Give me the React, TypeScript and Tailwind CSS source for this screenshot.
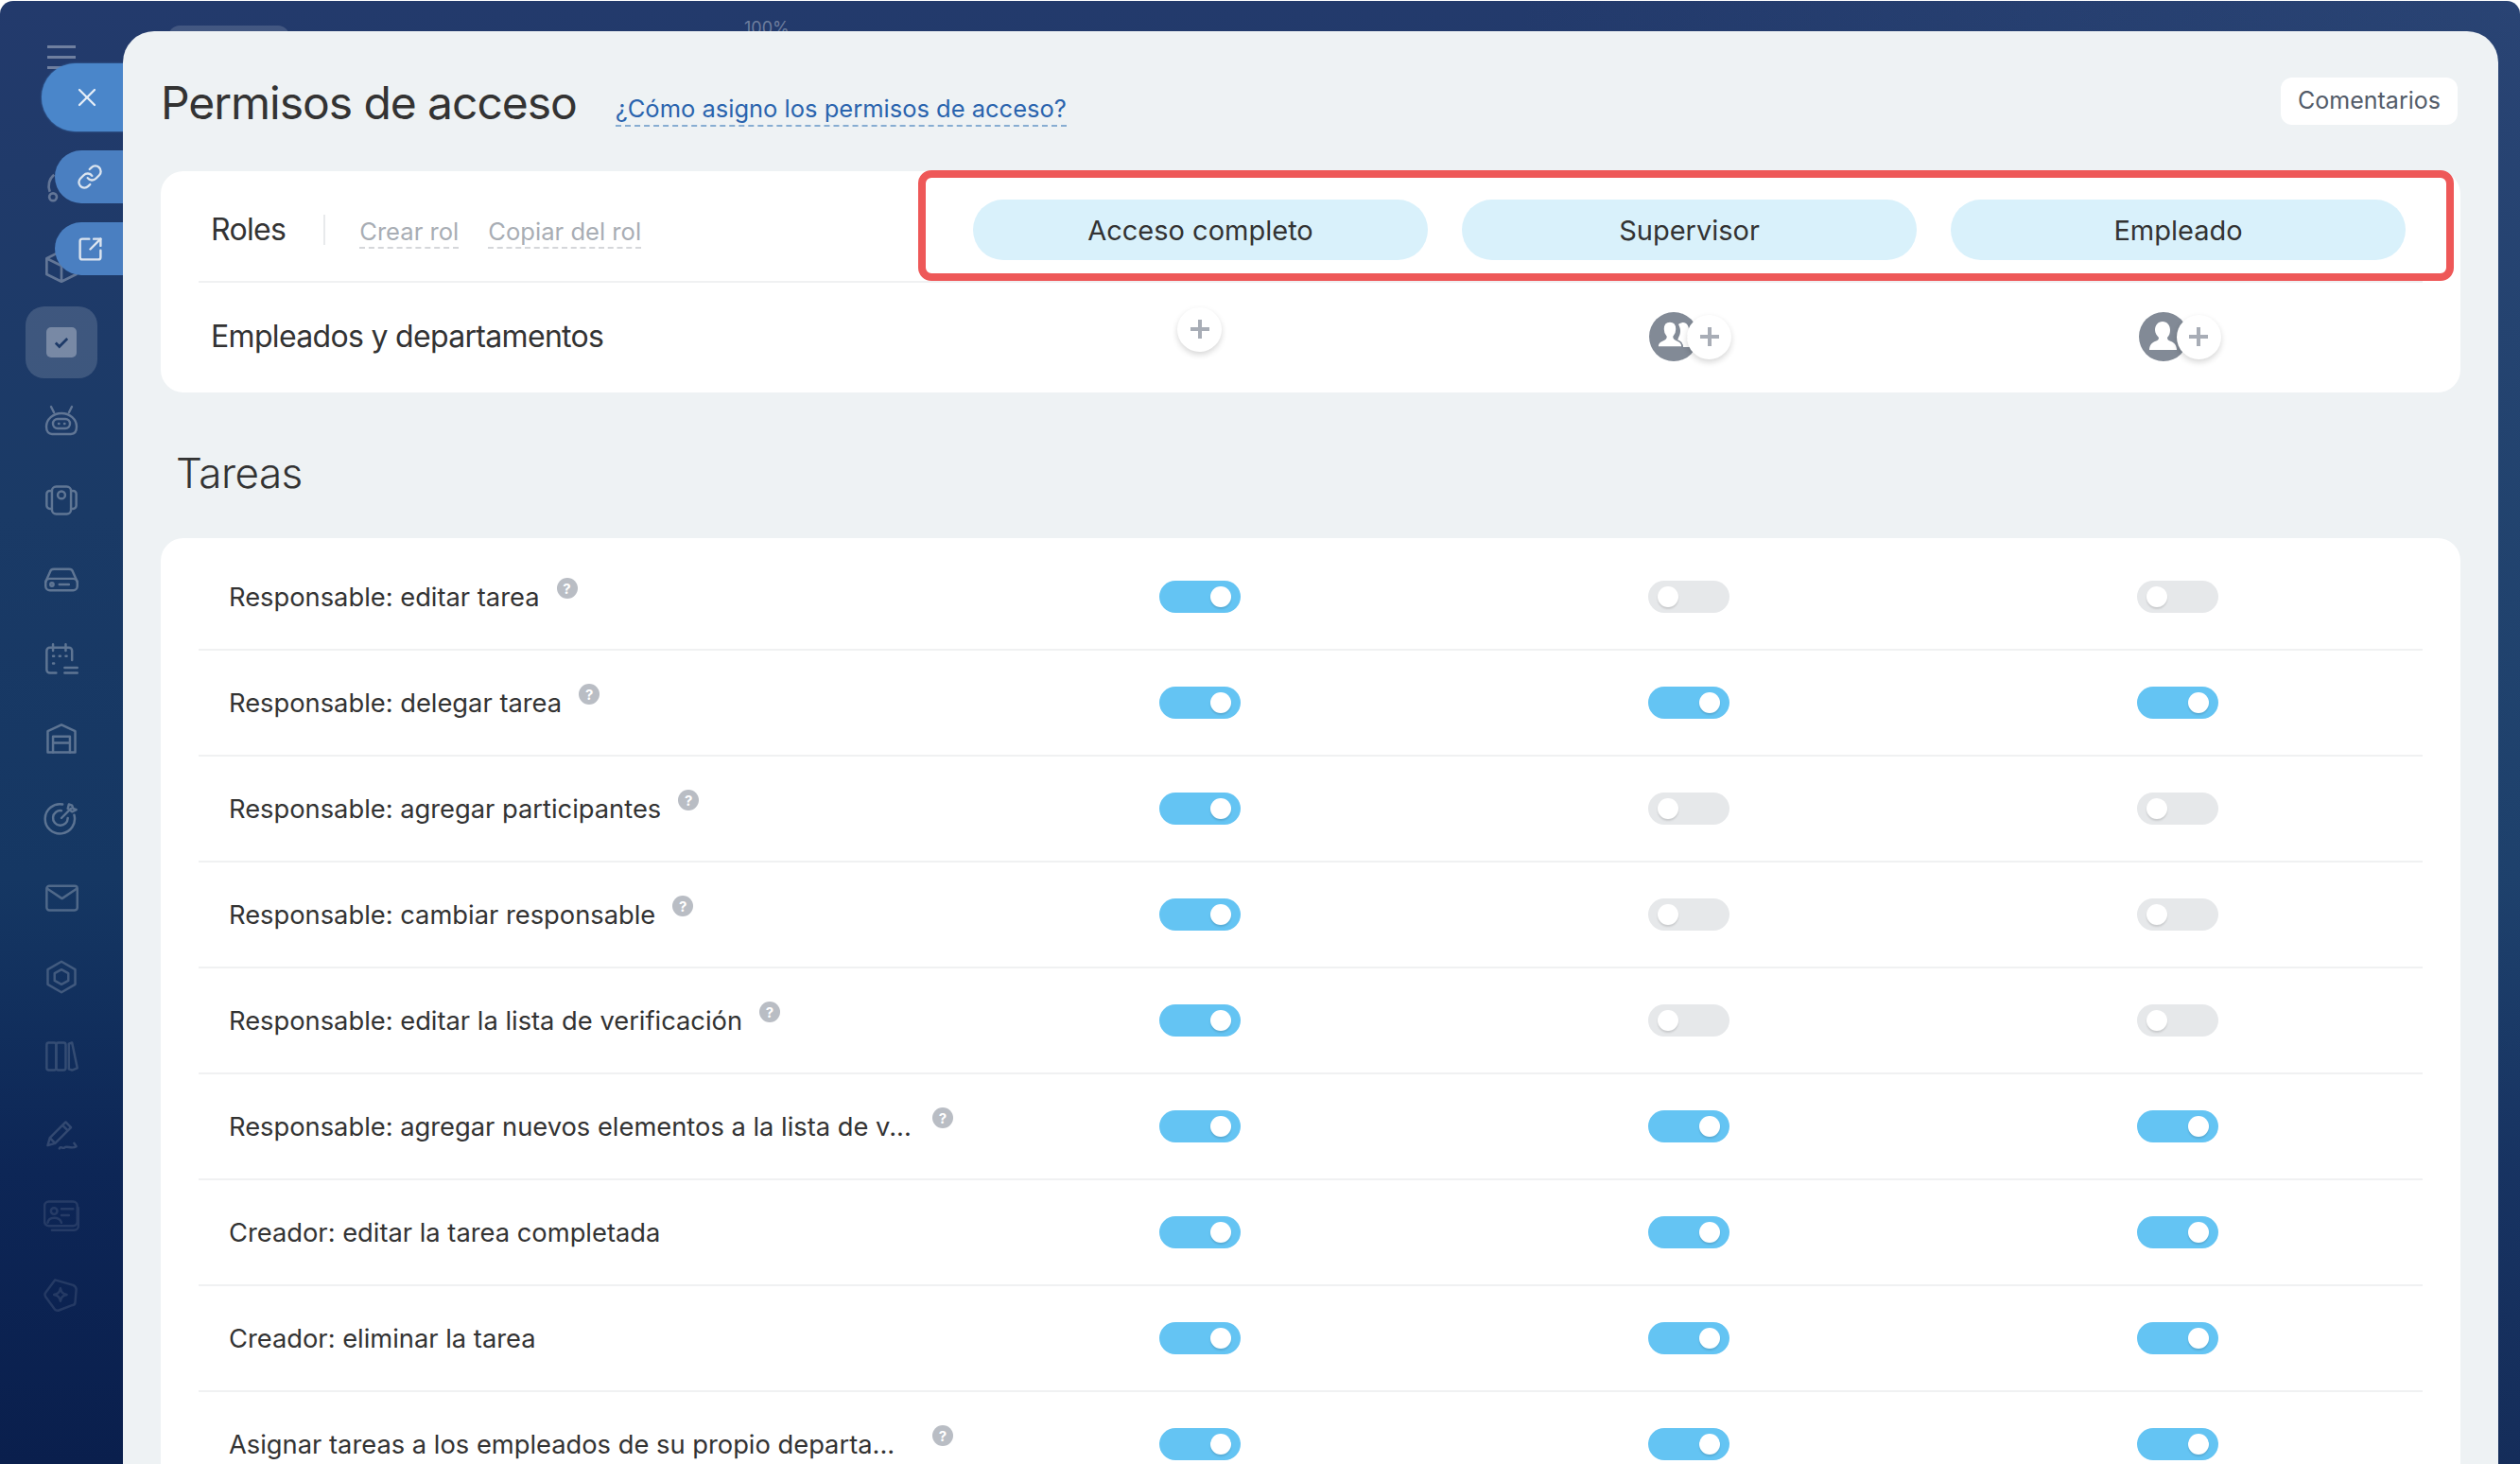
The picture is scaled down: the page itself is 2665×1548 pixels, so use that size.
import React from 'react';
import { X, Link, SquareArrowOutUpRight } from 'lucide-react';

type Row = { label: string; help?: boolean; cut?: boolean; on: [boolean, boolean, boolean] };

const rows: Row[] = [
  { label: 'Responsable: editar tarea', help: true, on: [true, false, false] },
  { label: 'Responsable: delegar tarea', help: true, on: [true, true, true] },
  { label: 'Responsable: agregar participantes', help: true, on: [true, false, false] },
  { label: 'Responsable: cambiar responsable', help: true, on: [true, false, false] },
  { label: 'Responsable: editar la lista de verificación', help: true, on: [true, false, false] },
  { label: 'Responsable: agregar nuevos elementos a la lista de v...', help: true, cut: true, on: [true, true, true] },
  { label: 'Creador: editar la tarea completada', on: [true, true, true] },
  { label: 'Creador: eliminar la tarea', on: [true, true, true] },
  { label: 'Asignar tareas a los empleados de su propio departa...', help: true, cut: true, on: [true, true, true] },
];

const sideIcons: { o: string; d: React.ReactNode }[] = [
  { o: 'opacity-30', d: <><rect x="8" y="3" width="18" height="26" rx="4" /><circle cx="17" cy="11" r="3.500" /><path d="M8 7H6a3 3 0 0 0-3 3v11a3 3 0 0 0 3 3h2M26 7h2a3 3 0 0 1 3 3v11a3 3 0 0 1-3 3h-2" /></> },
  { o: 'opacity-30', d: <><path d="M2 18l4-9a4 4 0 0 1 4-3h14a4 4 0 0 1 4 3l4 9" /><rect x="2" y="15" width="30" height="11" rx="4" /><path d="M15 20.500h9" /><circle cx="8" cy="20.500" r="1.500" /></> },
  { o: 'opacity-30', d: <><path d="M12 29H6a3 3 0 0 1-3-3V8a3 3 0 0 1 3-3h18a3 3 0 0 1 3 3v9M9 2v6M21 2v6" /><path d="M20 24h12M20 29h12M9 13h1M15 13h1M21 13h1M9 20h1" /></> },
  { o: 'opacity-30', d: <><path d="M4 29V9l13-6 13 6v20H4z" /><path d="M9 29V14h16v15M9 20h16" /></> },
  { o: 'opacity-30', d: <><path d="M29 13a14 14 0 1 1-11-10" /><path d="M23 16a7 7 0 1 1-6-7" /><path d="M17 16l9-9M23 7l1-4 3 1 1 3 3 1-4 2z" /></> },
  { o: 'opacity-25', d: <><rect x="3" y="5" width="29" height="23" rx="2.500" /><path d="M4 8l13.500 9L31 8" /></> },
  { o: 'opacity-20', d: <><path d="M17 1.500l13 7.500v14l-13 7.500L4 23V9z" /><path d="M17 9l6.500 3.500v7L17 23l-6.500-3.500v-7z" /></> },
  { o: 'opacity-15', d: <><rect x="3" y="3" width="9" height="26" rx="2" /><rect x="12" y="3" width="9" height="26" rx="2" /><path d="M24 4l3-1 5 24-5 2-3-1z" /></> },
  { o: 'opacity-15', d: <><path d="M4 25l2-7L21 3l5 5-15 15zM6 18l5 5M18 6l5 5" /><path d="M15 28c1-3 3 1 5-1s7 2 11-1l-2-3" /></> },
  { o: 'opacity-10', d: <><rect x="1" y="3" width="31" height="23" rx="4" /><path d="M8 30h21a4 4 0 0 0 4-4V9" /><circle cx="10" cy="12" r="3" /><path d="M4 23c1-6 11-6 13 0M17 10h11M17 16h7" /></> },
  { o: 'opacity-10', d: <><path d="M11 2l17 5c2 1 3 2 3 4l-1 12c0 2-1 3-3 3l-13 5c-2 0-3 0-4-2L2 18c-1-2-1-3 0-4z" /><path d="M16 10c1 4 2 5 6 6-4 1-5 2-6 6-1-4-2-5-6-6 4-1 5-2 6-6z" /></> },
];

function Toggle({ on }: { on: boolean }) {
  return (
    <div className={`flex h-[34px] w-[86px] items-center rounded-full px-[10px] ${on ? 'justify-end bg-[#64c4f3]' : 'justify-start bg-[#e6e8ea]'}`}>
      <span className="h-[22px] w-[22px] rounded-full bg-white shadow-[0_2px_2px_rgba(0,0,0,0.12)]" />
    </div>
  );
}

function HelpDot() {
  return (
    <span className="mb-[20px] ml-[18px] flex h-[22px] w-[22px] items-center justify-center rounded-full bg-[#b9bdc4] text-[15px] font-bold leading-none text-white">?</span>
  );
}

function AddButton({ className = '' }: { className?: string }) {
  return (
    <span className={`flex h-[47px] w-[47px] items-center justify-center rounded-full bg-white shadow-[0_3px_6px_rgba(0,0,0,0.16)] ${className}`}>
      <svg viewBox="0 0 20 20" className="h-[20px] w-[20px]" stroke="#a8adb6" strokeWidth="4">
        <path d="M10 0v20M0 10h20" />
      </svg>
    </span>
  );
}

function PersonAvatar({ group }: { group: boolean }) {
  return (
    <div className="flex items-center pl-[4px]">
      <span className="flex h-[52px] w-[52px] shrink-0 items-center justify-center rounded-full bg-[#828a96]">
        <svg viewBox="0 0 52 52" className="h-[52px] w-[52px]" fill="#fff">
          {group ? (
            <>
              <path d="M36 11c4 0 6 4 6 8 0 3-1 5-2 7 0 2 1 3 3 4 3 1 5 3 5 6v1H36c0-4-3-6-6-7 0-1 1-2 1-3 1-2 2-4 2-7 0-3-1-5-2-7 1-1 3-2 5-2z" />
              <path d="M22 10c5 0 7 4 7 8 0 3-1 6-3 8 0 2 1 3 4 4 3 1 5 3 5 7H9c0-4 2-6 5-7 3-1 4-2 4-4-2-2-3-5-3-8 0-4 2-8 7-8z" stroke="#828a96" strokeWidth="1.500" />
            </>
          ) : (
            <path d="M25 10c5 0 8 4 8 9 0 3-1 6-3 8 0 2 1 3 4 4 3 1 6 4 6 9H11c0-5 3-8 6-9 3-1 4-2 4-4-2-2-4-5-4-8 0-5 3-9 8-9z" />
          )}
        </svg>
      </span>
      <AddButton className="relative -ml-[12px]" />
    </div>
  );
}

export default function App() {
  return (
    <div className="relative flex h-[1548px] w-[2665px] overflow-hidden bg-white font-['Inter',sans-serif] text-[#333]">
      <div className="relative mt-px flex w-full overflow-hidden rounded-t-[14px] bg-[linear-gradient(90deg,transparent_60%,rgba(70,110,150,0.18)),linear-gradient(180deg,#233a6c_0%,#1a3a66_35%,#153763_60%,#0d2656_80%,#0a1f4d_100%)]">
        {/* left menu */}
        <aside className="flex w-[130px] shrink-0 flex-col items-center pt-[47px]">
          <div className="flex w-[30px] flex-col gap-[8px] opacity-35">
            <span className="h-[3px] bg-white" />
            <span className="h-[3px] bg-white" />
            <span className="h-[3px] bg-white" />
          </div>
          <svg viewBox="0 0 34 32" className="mt-[105px] h-[36px] w-[38px] opacity-30" fill="none" stroke="#fff" strokeWidth="2.400">
            <path d="M6 22a14 14 0 0 1 4-16" /><circle cx="9" cy="27" r="3.500" />
          </svg>
          <svg viewBox="0 0 34 32" className="mt-[49px] h-[36px] w-[38px] opacity-30" fill="none" stroke="#fff" strokeWidth="2.400" strokeLinejoin="round">
            <path d="M3 9l14-7 14 7v15l-14 7-14-7zM3 9l14 7 14-7M17 16v15" />
          </svg>
          <div className="mt-[25px] flex h-[76px] w-[76px] items-center justify-center rounded-[20px] bg-white/15">
            <span className="flex h-[32px] w-[32px] items-center justify-center rounded-[5px] bg-white/30">
              <svg viewBox="0 0 16 16" className="h-[18px] w-[18px]" fill="none" stroke="#1d3a68" strokeWidth="2.400"><path d="M2.500 8.500l3.500 3.500 7.500-7.500" /></svg>
            </span>
          </div>
          <div className="mt-[27px] flex flex-col items-center gap-[48px]">
            <svg viewBox="0 0 38 36" className="h-[36px] w-[38px] opacity-30" fill="none" stroke="#fff" strokeWidth="2.400" strokeLinecap="round">
              <path d="M3 24a16 14 0 0 1 32 0c0 6-3 8-6 8H9c-3 0-6-2-6-8zM11 9L8 3M27 9l3-6" />
              <rect x="10" y="16" width="18" height="10" rx="5" />
              <path d="M16 21h.5M22 21h.5" />
            </svg>
            {sideIcons.map((icon, i) => (
              <svg key={i} viewBox="0 0 34 32" className={`h-[36px] w-[38px] ${icon.o}`} fill="none" stroke="#fff" strokeWidth="2.200" strokeLinecap="round" strokeLinejoin="round">
                {icon.d}
              </svg>
            ))}
          </div>
        </aside>

        {/* floating slider buttons */}
        <div className="absolute left-[44px] top-[66px] flex h-[72px] w-[90px] items-center justify-center rounded-l-full bg-[#4a86ca] pl-[6px] shadow-[0_0_2px_rgba(74,134,202,1)]">
          <X size={32} strokeWidth={1.700} color="#e6eef8" />
        </div>
        <div className="absolute left-[58px] top-[158px] flex h-[56px] w-[76px] items-center justify-center rounded-l-full bg-[#4a7fc1] pr-[2px]">
          <Link size={28} strokeWidth={2} color="#dbe4ef" />
        </div>
        <div className="absolute left-[58px] top-[234px] flex h-[56px] w-[76px] items-center justify-center rounded-l-full bg-[#4a7fc1] pr-[2px]">
          <SquareArrowOutUpRight size={29} strokeWidth={2} color="#dbe4ef" />
        </div>

        <span className="absolute left-[178px] top-[26px] h-[12px] w-[128px] rounded-t-[14px] bg-white/15" />
        <span className="absolute left-[787px] top-[20px] text-[18px] leading-none text-white/35">100%</span>

        {/* slider panel */}
        <main className="relative mr-[23px] mt-[32px] flex-1 overflow-hidden rounded-t-[33px] bg-[#eef2f4] px-[40px]">
          <header className="flex h-[148px] items-start pt-[47px]">
            <h1 className="text-[48px] font-normal leading-[58px] tracking-[-1.05px] text-[#333]">Permisos de acceso</h1>
            <a className="ml-[41px] mt-[18px] border-b-2 border-dashed border-[#2067b0]/50 text-[25.500px] leading-[34px] text-[#2a64ae]">¿Cómo asigno los permisos de acceso?</a>
            <button className="ml-auto mr-[3px] mt-[2px] h-[50px] w-[187px] rounded-[12px] bg-white text-[25px] text-[#535c69]">Comentarios</button>
          </header>

          {/* roles card */}
          <section className="h-[234px] rounded-[24px] bg-white px-[40px]">
            <div className="flex h-[118px] items-center border-b-2 border-[#f0f1f2] pl-[13px] pt-[8px]">
              <span className="text-[32px] tracking-[-0.68px] text-[#333]">Roles</span>
              <span className="ml-[40px] mr-[36px] h-[32px] w-[2px] bg-[#e8eaec]" />
              <a className="mt-[4px] border-b-2 border-dashed border-[#d5d7da] text-[25.600px] leading-[33px] text-[#a8adb4]">Crear rol</a>
              <a className="ml-[31px] mt-[4px] border-b-2 border-dashed border-[#d5d7da] text-[25.600px] leading-[33px] text-[#a8adb4]">Copiar del rol</a>
              <div className="ml-auto mr-[18px] flex gap-[36px]">
                {['Acceso completo', 'Supervisor', 'Empleado'].map(role => (
                  <div key={role} className="flex h-[64px] w-[481px] items-center justify-center rounded-full bg-[#d9f1fb] pt-[2px] text-[29px] text-[#333]">{role}</div>
                ))}
              </div>
            </div>
            <div className="flex h-[116px] items-center pb-[2px] pl-[13px]">
              <span className="w-[787px] text-[32px] tracking-[-0.68px] text-[#333]">Empleados y departamentos</span>
              <div className="grid flex-1 grid-cols-3 items-center justify-items-center">
                <AddButton className="-mt-[16px]" />
                <PersonAvatar group />
                <PersonAvatar group={false} />
              </div>
            </div>
          </section>

          <h2 className="mt-[53px] pl-[16px] text-[44px] font-light leading-[64px] tracking-[-0.5px] text-[#333]">Tareas</h2>

          {/* permissions */}
          <section className="mt-[37px] rounded-t-[24px] bg-white px-[40px] pt-[7px]">
            {rows.map((row, i) => (
              <div key={i} className="flex h-[112px] items-center border-b-2 border-[#f0f1f2] pl-[32px]">
                <div className="flex w-[768px] items-center pt-[2px]">
                  <span className={`whitespace-nowrap text-[27.300px] text-[#333] ${row.cut ? 'w-[726px]' : ''}`}>{row.label}</span>
                  {row.help && <HelpDot />}
                </div>
                <div className="grid flex-1 grid-cols-3 justify-items-center">
                  {row.on.map((v, j) => <Toggle key={j} on={v} />)}
                </div>
              </div>
            ))}
          </section>

          {/* highlight drawn on top of the roles card */}
          <div className="absolute left-[841px] top-[147px] h-[117px] w-[1624px] rounded-[14px] border-[8px] border-[#ee5858]" />
        </main>
      </div>
    </div>
  );
}
